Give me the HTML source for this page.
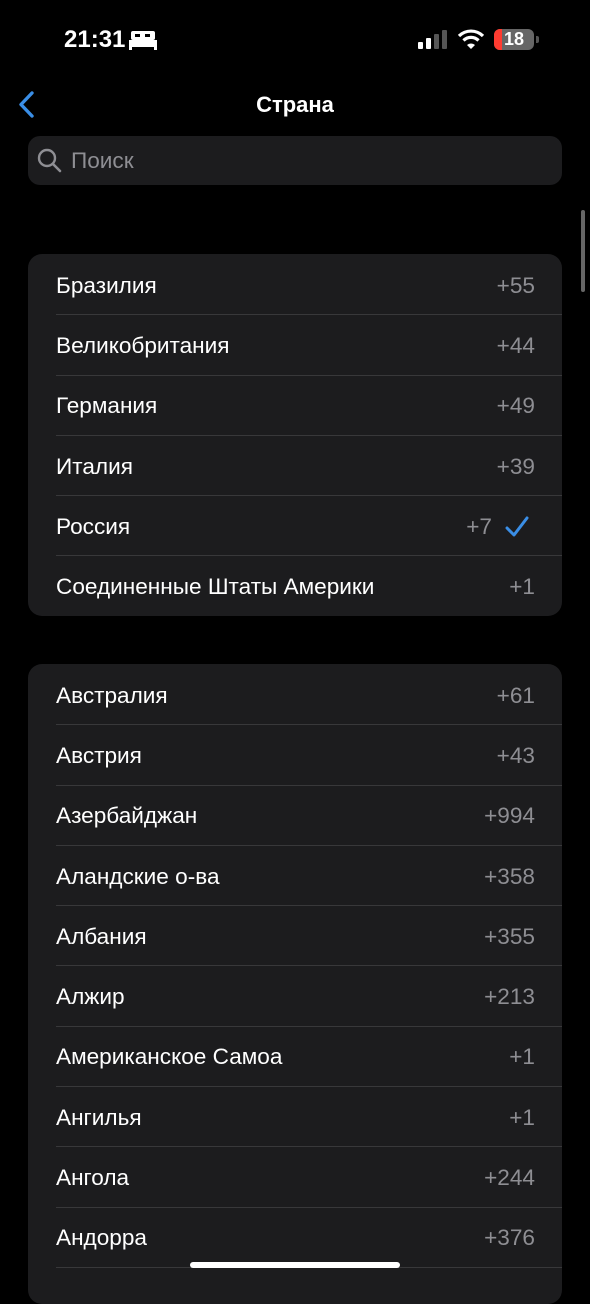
<!DOCTYPE html>
<html><head><meta charset="utf-8"><style>
*{margin:0;padding:0;box-sizing:border-box}
body{width:590px;height:1280px;background:#000;overflow:hidden;position:relative;font-family:"Liberation Sans",sans-serif;color:#fff}
.abs{position:absolute}
.card{position:absolute;left:28px;width:534px;background:#1c1c1e;border-radius:14px;overflow:hidden}
.row{height:60.3px;position:relative;display:flex;align-items:center;padding-left:28px;padding-top:3px;font-size:22.6px}
.row+.row:before{content:"";position:absolute;left:28px;right:0;top:0;border-top:1px solid #38383a}
.num{position:absolute;right:27px;color:#8e8e93;font-size:22.6px}
</style></head><body>
<div class="abs" style="left:64px;top:26px;font-size:24px;font-weight:bold">21:31</div>
<svg class="abs" style="left:129px;top:31px" width="28" height="20" viewBox="0 0 28 20"><rect x="2" y="0" width="24" height="9" rx="2" fill="#fff"/><rect x="0" y="9" width="28" height="7" fill="#fff"/><rect x="0" y="14" width="3" height="5" fill="#fff"/><rect x="25" y="14" width="3" height="5" fill="#fff"/><rect x="6" y="3" width="5" height="3" fill="#000"/><rect x="16" y="3" width="5" height="3" fill="#000"/></svg>
<svg class="abs" style="left:418px;top:30px" width="32" height="20"><rect x="0" y="12" width="5" height="7" rx="1" fill="#fff"/><rect x="8" y="8" width="5" height="11" rx="1" fill="#fff"/><rect x="16" y="4" width="5" height="15" rx="1" fill="#555"/><rect x="24" y="0" width="5" height="19" rx="1" fill="#555"/></svg>
<svg class="abs" style="left:458px;top:29px" width="26" height="20" viewBox="0 0 26 20"><path d="M1 7A17 17 0 0 1 25 7" stroke="#fff" stroke-width="3.2" fill="none"/><path d="M5.5 11.5A10.5 10.5 0 0 1 20.5 11.5" stroke="#fff" stroke-width="3.2" fill="none"/><path d="M9 16L13 20L17 16A6 6 0 0 0 9 16Z" fill="#fff"/></svg>
<div class="abs" style="left:494px;top:29px;width:40px;height:21px;border-radius:6px;background:#666;overflow:hidden"><div style="width:8px;height:100%;background:#ff3b30"></div></div>
<div class="abs" style="left:494px;top:29px;width:40px;height:21px;text-align:center;font-size:18px;font-weight:bold;line-height:21px">18</div>
<div class="abs" style="left:536px;top:36px;width:3px;height:7px;background:#555;border-radius:0 2px 2px 0"></div>
<svg class="abs" style="left:16px;top:90px" width="20" height="30"><path d="M16 3L5 14.5L16 26" stroke="#3a8ee6" stroke-width="3.4" fill="none" stroke-linecap="round" stroke-linejoin="round"/></svg>
<div class="abs" style="left:0;width:590px;top:92px;text-align:center;font-size:22px;font-weight:bold">Страна</div>
<div class="abs" style="left:28px;top:136px;width:534px;height:49px;background:#1c1c1e;border-radius:12px"></div>
<svg class="abs" style="left:36px;top:147px" width="28" height="28"><circle cx="11" cy="11" r="8" stroke="#8e8e93" stroke-width="2.4" fill="none"/><path d="M17 17L24 24" stroke="#8e8e93" stroke-width="2.6" stroke-linecap="round"/></svg>
<div class="abs" style="left:71px;top:148px;font-size:22.6px;color:#8e8e93">Поиск</div>
<div class="abs" style="left:581px;top:210px;width:4px;height:82px;border-radius:2px;background:#666"></div>
<div class="card" style="top:254px">
<div class="row">Бразилия<span class="num">+55</span></div>
<div class="row">Великобритания<span class="num">+44</span></div>
<div class="row">Германия<span class="num">+49</span></div>
<div class="row">Италия<span class="num">+39</span></div>
<div class="row">Россия<span class="num" style="right:70px">+7</span><svg style="position:absolute;right:32px;top:20px" width="26" height="24"><path d="M3 13L10 20L23 3" stroke="#3a8ee6" stroke-width="3" fill="none" stroke-linecap="round" stroke-linejoin="round"/></svg></div>
<div class="row">Соединенные Штаты Америки<span class="num">+1</span></div>
</div>
<div class="card" style="top:664px;height:640px">
<div class="row">Австралия<span class="num">+61</span></div>
<div class="row">Австрия<span class="num">+43</span></div>
<div class="row">Азербайджан<span class="num">+994</span></div>
<div class="row">Аландские о-ва<span class="num">+358</span></div>
<div class="row">Албания<span class="num">+355</span></div>
<div class="row">Алжир<span class="num">+213</span></div>
<div class="row">Американское Самоа<span class="num">+1</span></div>
<div class="row">Ангилья<span class="num">+1</span></div>
<div class="row">Ангола<span class="num">+244</span></div>
<div class="row">Андорра<span class="num">+376</span></div>
<div class="row"></div>
</div>
<div class="abs" style="left:190px;top:1262px;width:210px;height:6px;border-radius:3px;background:#fff"></div>
</body></html>
